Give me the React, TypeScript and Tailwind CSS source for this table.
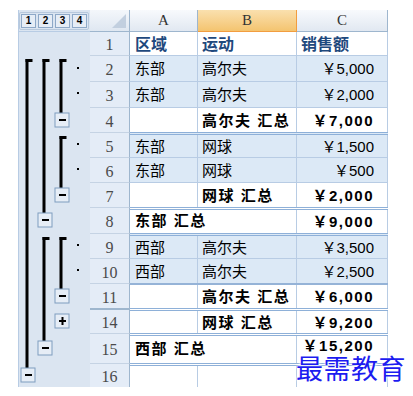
import React from "react";

type Row = {
  n: string;
  h: string;
  a?: string;
  b?: string;
  c?: string;
  kind: "head" | "data" | "sub" | "empty";
  top: "thin" | "double" | "thick";
  span?: boolean;
};

const rows: Row[] = [
  { n: "1", h: "h-[23px]", a: "区域", b: "运动", c: "销售额", kind: "head", top: "thin" },
  { n: "2", h: "h-[26px]", a: "东部", b: "高尔夫", c: "￥5,000", kind: "data", top: "thin" },
  { n: "3", h: "h-[26px]", a: "东部", b: "高尔夫", c: "￥2,000", kind: "data", top: "thin" },
  { n: "4", h: "h-[25px]", b: "高尔夫 汇总", c: "￥7,000", kind: "sub", top: "thin" },
  { n: "5", h: "h-[25px]", a: "东部", b: "网球", c: "￥1,500", kind: "data", top: "double" },
  { n: "6", h: "h-[25px]", a: "东部", b: "网球", c: "￥500", kind: "data", top: "thin" },
  { n: "7", h: "h-[25px]", b: "网球 汇总", c: "￥2,000", kind: "sub", top: "thin" },
  { n: "8", h: "h-[26px]", a: "东部 汇总", c: "￥9,000", kind: "sub", top: "double", span: true },
  { n: "9", h: "h-[25px]", a: "西部", b: "高尔夫", c: "￥3,500", kind: "data", top: "double" },
  { n: "10", h: "h-[25px]", a: "西部", b: "高尔夫", c: "￥2,500", kind: "data", top: "thin" },
  { n: "11", h: "h-[25px]", b: "高尔夫 汇总", c: "￥6,000", kind: "sub", top: "thick" },
  { n: "14", h: "h-[25px]", b: "网球 汇总", c: "￥9,200", kind: "sub", top: "double" },
  { n: "15", h: "h-[30px]", a: "西部 汇总", c: "￥15,200", kind: "sub", top: "double", span: true },
  { n: "16", h: "h-[24px]", kind: "empty", top: "double" },
];

const topBorder = {
  thin: "border-t border-t-[#b8cce4]",
  double: "border-t-[3px] border-double border-t-[#8eb0d8]",
  thick: "border-t-2 border-t-[#95b3d7]",
};

function OutlineButton({ x, y, plus }: { x: number; y: number; plus?: boolean }) {
  return (
    <g>
      <rect x={x - 7} y={y - 7} width={14} height={14} fill="#e6edf6" stroke="#7f9dbf" strokeWidth={1} />
      <rect x={x - 3} y={y - 1} width={7} height={2} fill="#000" />
      {plus ? <rect x={x - 0.5} y={y - 4} width={2} height={8} fill="#000" /> : null}
    </g>
  );
}

function Bar({ x, y1, y2 }: { x: number; y1: number; y2: number }) {
  return (
    <g>
      <rect x={x - 1.5} y={y1} width={3} height={y2 - y1} fill="#000" />
      <rect x={x - 1.5} y={y1} width={7} height={3} fill="#000" />
    </g>
  );
}

function OutlinePanel() {
  return (
    <div className="w-[72px] flex flex-col bg-[#dbe5f1] border-l border-[#b8cce4]">
      <div className="h-[22px] flex items-center border-b border-[#b8cce4]">
        <div className="flex gap-[2px] p-[1px] rounded-[2px] border border-[#b7c8dc]">
          {["1", "2", "3", "4"].map((l) => (
            <div
              key={l}
              className="w-[15px] h-[14px] flex items-center justify-center bg-[#e6edf6] border border-[#8ea9c8] text-[10px] font-bold leading-none text-black"
              style={{ fontFamily: "'Liberation Sans', sans-serif" }}
            >
              {l}
            </div>
          ))}
        </div>
      </div>
      <svg width="71" height="355" className="block">
        <Bar x={8} y1={27} y2={336} />
        <OutlineButton x={9} y={343} />

        <Bar x={25} y1={27} y2={181} />
        <OutlineButton x={26} y={188} />
        <Bar x={25} y1={205} y2={309} />
        <OutlineButton x={26} y={316} />

        <Bar x={42} y1={27} y2={81} />
        <OutlineButton x={43} y={88} />
        <Bar x={42} y1={104} y2={156} />
        <OutlineButton x={43} y={163} />
        <Bar x={42} y1={205} y2={257} />
        <OutlineButton x={43} y={264} />
        <OutlineButton x={43} y={289} plus />

        {[35, 60, 111, 136, 212, 237].map((y) => (
          <rect key={y} x={58} y={y} width={2} height={2} fill="#000" />
        ))}
      </svg>
    </div>
  );
}

function Value({ text, bold }: { text?: string; bold?: boolean }) {
  if (!text) return null;
  return <span className={bold ? "tracking-[1.5px]" : ""}>{text}</span>;
}

export default function App() {
  const cellFont = { fontFamily: "'Liberation Sans', 'Noto Sans CJK SC', sans-serif" };
  const numFont = { fontFamily: "'Liberation Serif', serif" };

  return (
    <div className="relative w-[413px] h-[396px] bg-white overflow-hidden">
      <div className="flex pt-[10px] pl-[18px]">
        <OutlinePanel />

        <div className="flex flex-col w-[298px]">
          {/* column headers */}
          <div className="flex h-[22px]">
            <div className="relative w-[40px] bg-gradient-to-b from-[#f4f7fb] to-[#dfe7f1] border-r border-b border-[#9eb6ce]">
              <div className="absolute right-[3px] bottom-[3px] w-0 h-0 border-l-[14px] border-l-transparent border-b-[14px] border-b-[#c2cfdf]" />
            </div>
            <div
              className="w-[68px] flex items-center justify-center bg-gradient-to-b from-[#f8fafd] to-[#e1e8f1] border-r border-b border-[#9eb6ce] text-[15px] text-[#333]"
              style={numFont}
            >
              A
            </div>
            <div
              className="w-[99px] flex items-center justify-center bg-gradient-to-b from-[#fae0ae] to-[#f4c46f] border-r border-b border-[#f29d3f] text-[15px] text-[#333]"
              style={numFont}
            >
              B
            </div>
            <div
              className="w-[91px] flex items-center justify-center bg-gradient-to-b from-[#f8fafd] to-[#e1e8f1] border-r border-b border-[#9eb6ce] text-[15px] text-[#333]"
              style={numFont}
            >
              C
            </div>
          </div>

          {rows.map((r, i) => {
            const bg = r.kind === "data" ? "bg-[#dce9f6]" : "bg-white";
            const txt =
              r.kind === "head"
                ? "text-[16px] font-bold text-[#1f497d]"
                : r.kind === "sub"
                  ? "text-[15px] font-bold text-black"
                  : "text-[15px] text-black";
            const bold = r.kind === "sub";
            const rowTop = i === 0 ? "" : topBorder[r.top];
            const headTop =
              i === 0 ? "" : r.n === "14" ? "border-t-2 border-t-[#9eb6ce]" : "border-t border-t-[#c5d3e4]";
            const valueAlign = r.n === "15" ? "items-start pt-[2px] leading-[15px]" : "items-center pt-[2px]";
            return (
              <div key={r.n} className={`flex ${r.h}`}>
                <div
                  className={`w-[40px] flex items-center justify-center pt-[3px] bg-[#e4ecf7] border-r border-[#9eb6ce] ${headTop} text-[16px] text-[#4a4a4a]`}
                  style={numFont}
                >
                  {r.n}
                </div>
                <div className={`flex w-[258px] ${bg} ${rowTop} ${txt}`} style={cellFont}>
                  {r.span ? (
                    <div className="w-[167px] flex items-center pl-[5px] border-r border-[#b8cce4] whitespace-pre">
                      <Value text={r.a} bold={bold} />
                    </div>
                  ) : (
                    <>
                      <div className="w-[68px] flex items-center pl-[5px] pt-[2px] border-r border-[#b8cce4] whitespace-pre">
                        <Value text={r.a} bold={bold} />
                      </div>
                      <div className="w-[99px] flex items-center pl-[4px] pt-[2px] border-r border-[#b8cce4] whitespace-pre">
                        <Value text={r.b} bold={bold} />
                      </div>
                    </>
                  )}
                  <div
                    className={`w-[91px] flex ${valueAlign} border-r border-[#b8cce4] whitespace-pre ${
                      r.kind === "head" ? "justify-start pl-[4px]" : "justify-end pr-[13px]"
                    }`}
                  >
                    <Value text={r.c} bold={bold} />
                  </div>
                </div>
              </div>
            );
          })}
        </div>
      </div>

      <div
        className="absolute left-[296px] top-[354px] text-[27px] leading-none tracking-[0.5px] text-[#1c1cf0] [text-shadow:0_0_3px_#fff,0_0_3px_#fff]"
        style={{ fontFamily: "'Noto Sans CJK SC', sans-serif" }}
      >
        最需教育
      </div>
    </div>
  );
}
